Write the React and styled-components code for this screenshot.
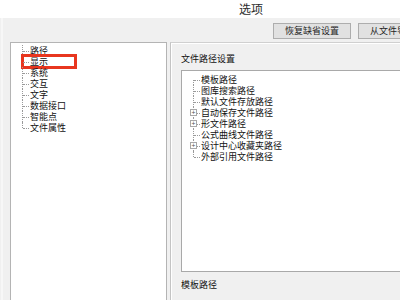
import React from 'react';
import styled, { createGlobalStyle } from 'styled-components';

const GlobalStyle = createGlobalStyle`
  html, body {
    margin: 0;
    padding: 0;
    overflow: hidden;
    background: #f0f0f0;
  }
  body {
    font-family: "Noto Sans CJK SC", "Microsoft YaHei", sans-serif;
    color: #111111;
  }
`;

const navItems = ['路径', '显示', '系统', '交互', '文字', '数据接口', '智能点', '文件属性'];

const pathItems = [
  { label: '模板路径' },
  { label: '图库搜索路径' },
  { label: '默认文件存放路径' },
  { label: '自动保存文件路径', expandable: true },
  { label: '形文件路径', expandable: true },
  { label: '公式曲线文件路径' },
  { label: '设计中心收藏夹路径', expandable: true },
  { label: '外部引用文件路径' },
];

const App = () => {
  return (
    <>
      <GlobalStyle />
      <Dialog>
        <TitleBar>选项</TitleBar>
        <DialogBody>
          <ButtonRow>
            <Button>恢复缺省设置</Button>
            <Button>从文件导入</Button>
          </ButtonRow>

          <Main>
            <NavPanel>
              <Tree>
                {navItems.map((item, i) => (
                  <TreeRow key={item} $last={i === navItems.length - 1}>
                    {item}
                    {item === '显示' && <Highlight />}
                  </TreeRow>
                ))}
              </Tree>
            </NavPanel>

            <GroupBox>
              <GroupLabel>文件路径设置</GroupLabel>
              <PathBox>
                <Tree>
                  {pathItems.map((item, i) => (
                    <TreeRow
                      key={item.label}
                      $first={i === 0}
                      $last={i === pathItems.length - 1}
                    >
                      {item.expandable && <Expander>+</Expander>}
                      {item.label}
                    </TreeRow>
                  ))}
                </Tree>
              </PathBox>
              <SelectedLabel>模板路径</SelectedLabel>
            </GroupBox>
          </Main>
        </DialogBody>
      </Dialog>
    </>
  );
};

export default App;

const Dialog = styled.div`
  width: 502px;
  height: 300px;
  display: flex;
  flex-direction: column;
`;

const TitleBar = styled.div`
  height: 18px;
  background: #ffffff;
  text-align: center;
  font-size: 12px;
  line-height: 18px;
  color: #2b2b2b;
`;

const DialogBody = styled.div`
  flex: 1;
  display: flex;
  flex-direction: column;
  background: #f0f0f0;
  border-left: 2px solid #f7f7f7;
  margin-left: 1px;
`;

const ButtonRow = styled.div`
  display: flex;
  gap: 7px;
  padding: 5px 0 0 270px;
  height: 19px;
`;

const Button = styled.div`
  box-sizing: border-box;
  height: 16px;
  padding: 0 11px;
  background: #e1e1e1;
  border: 1px solid #adadad;
  font-size: 9px;
  line-height: 14px;
  white-space: nowrap;
  color: #1e1e1e;
`;

const Main = styled.div`
  flex: 1;
  display: flex;
  gap: 3px;
  padding-left: 7px;
`;

const NavPanel = styled.div`
  width: 155px;
  background: #ffffff;
  border: 1px solid #b4b4b4;
  border-bottom: none;
`;

const Tree = styled.div`
  padding: 2px 0 0 7px;
`;

const TreeRow = styled.div`
  position: relative;
  height: 11px;
  line-height: 11px;
  font-size: 9px;
  padding-left: 12px;
  white-space: nowrap;

  &::before {
    content: '';
    position: absolute;
    left: 4px;
    top: ${(p) => (p.$first ? '50%' : '0')};
    bottom: ${(p) => (p.$last ? '50%' : '0')};
    border-left: 1px dotted #9a9a9a;
  }

  &::after {
    content: '';
    position: absolute;
    left: 5px;
    width: 6px;
    top: 50%;
    border-top: 1px dotted #9a9a9a;
  }
`;

const Highlight = styled.span`
  position: absolute;
  left: 3px;
  top: -2px;
  width: 56px;
  height: 15px;
  box-sizing: border-box;
  border: 3px solid #e8361f;
`;

const Expander = styled.span`
  position: absolute;
  z-index: 1;
  left: 1px;
  top: 2px;
  width: 7px;
  height: 7px;
  box-sizing: border-box;
  border: 1px solid #a8a8a8;
  background: #ffffff;
  font-size: 7px;
  line-height: 5px;
  text-align: center;
  color: #555;
`;

const GroupBox = styled.div`
  flex: 1;
  display: flex;
  flex-direction: column;
  border-top: 1px solid #d0d0d0;
  border-left: 1px solid #c4c4c4;
  box-shadow: inset 1px 1px 0 #ffffff;
  padding: 10px 0 0 10px;
`;

const GroupLabel = styled.div`
  font-size: 9px;
  line-height: 11px;
  height: 17px;
`;

const PathBox = styled.div`
  height: 199px;
  background: #ffffff;
  border: 1px solid #a9a9a9;
  border-right: none;
  padding-top: 1px;
`;

const SelectedLabel = styled.div`
  font-size: 9px;
  line-height: 11px;
  margin-top: 7px;
`;
